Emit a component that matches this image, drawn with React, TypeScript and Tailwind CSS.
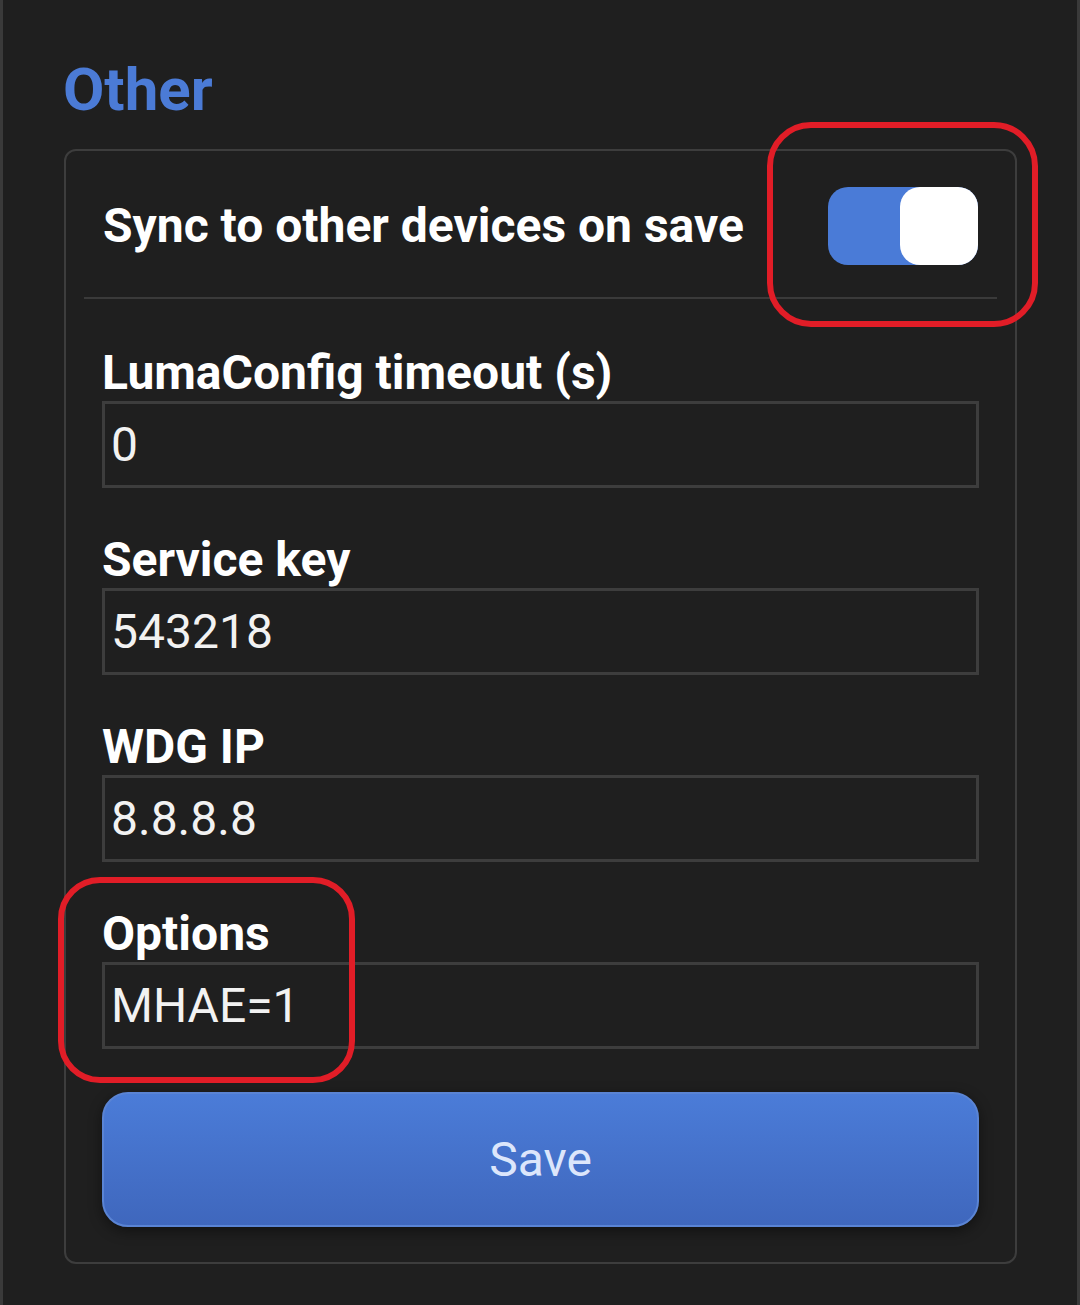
import { useState } from 'react'

const fields = [
  { label: 'LumaConfig timeout (s)', value: '0' },
  { label: 'Service key', value: '543218' },
  { label: 'WDG IP', value: '8.8.8.8' },
  { label: 'Options', value: 'MHAE=1' },
]

function Toggle({ on, onChange }: { on: boolean; onChange: (v: boolean) => void }) {
  return (
    <button
      type="button"
      onClick={() => onChange(!on)}
      className={`flex h-[78px] w-[150px] shrink-0 rounded-[20px] ${on ? 'justify-end bg-[#4a7bd7]' : 'justify-start bg-[#555]'}`}
    >
      <span className="h-[78px] w-[78px] rounded-[20px] bg-white" />
    </button>
  )
}

export default function App() {
  const [sync, setSync] = useState(true)

  return (
    <div
      className="relative h-[1305px] w-full border-x-[3px] border-[#3a3a3a] bg-[#1f1f1f] text-white"
      style={{ fontFamily: 'Roboto, "Noto Sans", sans-serif' }}
    >
      {/* Section title */}
      <h2 className="ml-[60px] pt-[60px] text-[60px] font-bold leading-[60px] text-[#4b7bd6]">Other</h2>

      {/* Card */}
      <div className="ml-[61px] mt-[29px] w-[953px] rounded-[12px] border-2 border-[#3d3d3d] pb-[35px]">
        <div className="mx-[18px] flex items-center justify-between border-b-2 border-[#3a3a3a] px-[19px] pb-[32px] pt-[36px]">
          <span className="text-[48px] font-bold leading-[56px]">Sync to other devices on save</span>
          <Toggle on={sync} onChange={setSync} />
        </div>

        <div className="flex flex-col gap-[44px] px-[36px] pt-[46px]">
          {fields.map(f => (
            <label key={f.label} className="flex flex-col">
              <span className="text-[48px] font-bold leading-[56px]">{f.label}</span>
              <input
                defaultValue={f.value}
                className="h-[87px] w-full border-[3px] border-[#3d3d3d] bg-transparent pl-[6px] text-[48px] text-[#f2f2f2] outline-none"
                style={{ fontFamily: 'Roboto, sans-serif' }}
              />
            </label>
          ))}
        </div>

        <div className="px-[36px] pt-[43px]">
          <button
            type="button"
            className="h-[135px] w-full rounded-[26px] border-2 border-[#5a84d4] bg-gradient-to-b from-[#4b7cd8] to-[#3f67bd] text-[48px] text-[#dce6fb] shadow-[0_4px_14px_rgba(0,0,0,0.45)]"
          >
            Save
          </button>
        </div>
      </div>

      {/* Red annotation marks */}
      <div className="pointer-events-none absolute left-[764px] top-[122px] h-[205px] w-[271px] rounded-[44px] border-[6px] border-[#e11d27]" />
      <div className="pointer-events-none absolute left-[55px] top-[877px] h-[206px] w-[297px] rounded-[42px] border-[6px] border-[#e11d27]" />
    </div>
  )
}
